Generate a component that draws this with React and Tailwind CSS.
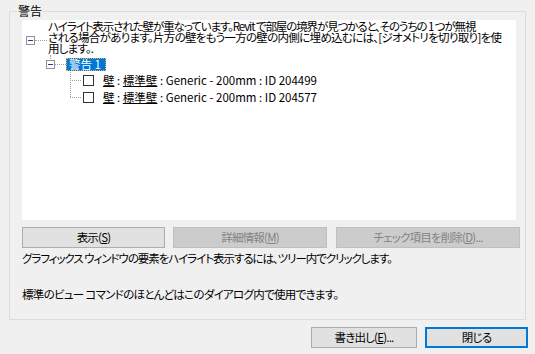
import React from 'react';

function MinusBox() {
  return (
    <span className="w-[9px] h-[9px] shrink-0 border border-[#919191] bg-white flex items-center justify-center">
      <span className="w-[5px] h-[1px] bg-[#1f3f99]" />
    </span>
  );
}

function Btn({ children, className = '', disabled, primary }) {
  return (
    <button
      className={`h-[21px] flex items-center justify-center leading-none ${
        disabled
          ? 'bg-[#cccccc] border border-[#bfbfbf] text-[#838383]'
          : primary
          ? 'bg-[#e1e1e1] border-2 border-[#0078d7]'
          : 'bg-[#e1e1e1] border border-[#adadad]'
      } ${className}`}
    >
      {children}
    </button>
  );
}

const items = ['204499', '204577'];

export default function App() {
  return (
    <div className="w-[535px] h-[354px] bg-[#f0f0f0] text-[11.5px] tracking-[-0.8px] text-black font-['Noto_Sans_CJK_JP','Noto_Sans',sans-serif] [font-feature-settings:'palt'] overflow-hidden">
      {/* Group box */}
      <div className="relative ml-[9px] mt-[11px] w-[517px] h-[309px] border border-[#dcdcdc] pl-[12px] pt-[8px]">
        <span className="absolute left-[7px] -top-[8px] px-[1px] bg-[#f0f0f0] leading-[14px] text-[12px] tracking-normal">警告</span>

        {/* Tree */}
        <div className="w-[494px] h-[200px] bg-white">
          <div className="flex">
            <div className="w-[26px] shrink-0 pl-[4px] pt-[16px] flex items-center h-fit">
              <MinusBox />
              <span className="w-[12px] border-t border-dotted border-[#a0a0a0]" />
            </div>
            <p className="leading-[11px] pt-[1px] whitespace-nowrap">
              <span className="tracking-[-1.1px]">
                ハイライト表示された壁が重なっています。Revit で部屋の境界が見つかると、そのうちの 1 つが無視
              </span>
              <br />
              <span className="tracking-[-0.7px]">
                される場合があります。片方の壁をもう一方の壁の内側に埋め込むには、[ジオメトリを切り取り]を使
              </span>
              <br />
              用します。.
            </p>
          </div>

          <div className="flex items-center h-[13px] mt-[4px] pl-[24px]">
            <span className="relative">
              <MinusBox />
              <span className="absolute left-[4px] -top-[5px] h-[4px] border-l border-dotted border-[#a0a0a0]" />
            </span>
            <span className="w-[11px] border-t border-dotted border-[#a0a0a0]" />
            <span className="h-[13px] w-[40px] px-[2px] bg-[#0078d7] text-white leading-[11px] tracking-normal border border-dotted border-[#f0b04a] flex items-center">
              警告 1
            </span>
          </div>

          <div className="relative ml-[48px] mt-[1px]">
            <span className="absolute left-0 top-0 h-[25px] border-l border-dotted border-[#a0a0a0]" />
            {items.map((id) => (
              <div key={id} className="flex items-center h-[17px]">
                <span className="w-[11px] border-t border-dotted border-[#a0a0a0]" />
                <span className="ml-[2px] w-[11px] h-[11px] border border-[#333333] bg-white" />
                <span className="ml-[9px] leading-none whitespace-nowrap tracking-normal">
                  <span className="underline">壁</span> : <span className="underline">標準壁</span> : Generic - 200mm : ID {id}
                </span>
              </div>
            ))}
          </div>
        </div>

        {/* Action buttons */}
        <div className="flex mt-[7px]">
          <Btn className="w-[143px]">
            表示(<span className="underline">S</span>)
          </Btn>
          <Btn className="w-[154px] ml-[8px]" disabled>
            詳細情報(<span className="underline">M</span>)
          </Btn>
          <Btn className="w-[184px] ml-[9px]" disabled>
            チェック項目を削除(<span className="underline">D</span>)...
          </Btn>
        </div>

        <p className="mt-[3px] leading-[14px] tracking-[-1.05px]">グラフィックス ウィンドウの要素をハイライト表示するには、ツリー内でクリックします。</p>
        <p className="mt-[22px] leading-[14px] tracking-[-0.7px]">標準のビュー コマンドのほとんどはこのダイアログ内で使用できます。</p>
      </div>

      {/* Dialog buttons */}
      <div className="flex justify-end mt-[7px] pr-[7px] gap-[8px]">
        <Btn className="w-[106px] h-[19px]">
          書き出し(<span className="underline">E</span>)...
        </Btn>
        <Btn className="w-[103px] h-[19px]" primary>
          閉じる
        </Btn>
      </div>
    </div>
  );
}
